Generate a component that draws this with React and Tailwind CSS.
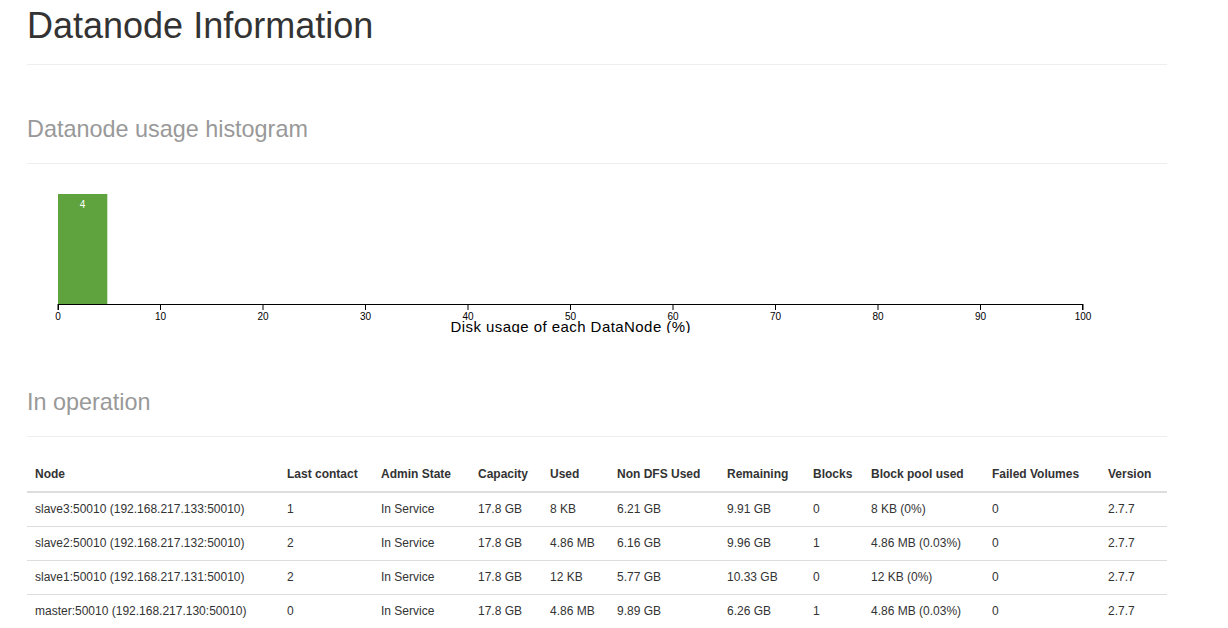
const COLS = [
  { key: "node", label: "Node", w: 252 },
  { key: "contact", label: "Last contact", w: 94 },
  { key: "state", label: "Admin State", w: 97 },
  { key: "cap", label: "Capacity", w: 72 },
  { key: "used", label: "Used", w: 67 },
  { key: "nondfs", label: "Non DFS Used", w: 110 },
  { key: "remain", label: "Remaining", w: 86 },
  { key: "blocks", label: "Blocks", w: 58 },
  { key: "pool", label: "Block pool used", w: 121 },
  { key: "failed", label: "Failed Volumes", w: 116 },
  { key: "version", label: "Version", w: 67 },
];

const NODES = [
  { node: "slave3:50010 (192.168.217.133:50010)", contact: "1", state: "In Service", cap: "17.8 GB", used: "8 KB", nondfs: "6.21 GB", remain: "9.91 GB", blocks: "0", pool: "8 KB (0%)", failed: "0", version: "2.7.7" },
  { node: "slave2:50010 (192.168.217.132:50010)", contact: "2", state: "In Service", cap: "17.8 GB", used: "4.86 MB", nondfs: "6.16 GB", remain: "9.96 GB", blocks: "1", pool: "4.86 MB (0.03%)", failed: "0", version: "2.7.7" },
  { node: "slave1:50010 (192.168.217.131:50010)", contact: "2", state: "In Service", cap: "17.8 GB", used: "12 KB", nondfs: "5.77 GB", remain: "10.33 GB", blocks: "0", pool: "12 KB (0%)", failed: "0", version: "2.7.7" },
  { node: "master:50010 (192.168.217.130:50010)", contact: "0", state: "In Service", cap: "17.8 GB", used: "4.86 MB", nondfs: "9.89 GB", remain: "6.26 GB", blocks: "1", pool: "4.86 MB (0.03%)", failed: "0", version: "2.7.7" },
];

const TICKS = Array.from({ length: 11 }, (_, i) => i * 10);

function Histogram() {
  // axis runs 1025px wide, from x=31 inside the svg
  const x0 = 31;
  const scale = 10.25;
  const axisY = 140;
  return (
    <svg width="1140" height="169" className="block" style={{ fontFamily: '"Liberation Sans", Arial, sans-serif' }}>
      <rect x={x0} y={30} width={49.3} height={axisY - 30} fill="#5fa33e" />
      <text x={x0 + 24.6} y={44} fontSize="10" fill="#fff" textAnchor="middle">4</text>
      <path d={`M${x0 + 0.5},${axisY + 6}V${axisY + 0.5}H${x0 + 1025 - 0.5}V${axisY + 6}`} fill="none" stroke="#000" strokeWidth="1" shapeRendering="crispEdges" />
      {TICKS.map(t => (
        <g key={t} transform={`translate(${x0 + t * scale},0)`}>
          <line x1="0" x2="0" y1={axisY} y2={axisY + 6} stroke="#000" strokeWidth="1" />
          <text y={axisY + 15.5} fontSize="10" textAnchor="middle" fill="#000">{t}</text>
        </g>
      ))}
      <text x={x0 + 512.5} y={168} fontSize="15" textAnchor="middle" textLength="240" lengthAdjust="spacing" fill="#000">
        Disk usage of each DataNode (%)
      </text>
    </svg>
  );
}

export default function App() {
  return (
    <div className="bg-white min-h-screen text-[#333]" style={{ fontFamily: '"Liberation Sans", Arial, sans-serif' }}>
      <div className="ml-[27px] w-[1140px]">
        <div className="pt-[6px] pb-[18px] border-b border-[#eee]">
          <h1 className="text-[36px] leading-[40px] font-normal">Datanode Information</h1>
        </div>

        <div className="mt-[51px] pb-[21px] border-b border-[#eee]">
          <h2 className="text-[23.4px] leading-[26px] text-[#999] font-normal">Datanode usage histogram</h2>
        </div>
        <Histogram />

        <div className="mt-[56px] pb-[21px] border-b border-[#eee]">
          <h2 className="text-[23.4px] leading-[26px] text-[#999] font-normal">In operation</h2>
        </div>

        <table className="mt-[21px] w-[1140px] table-fixed border-collapse text-[12px] leading-[17px]">
          <colgroup>
            {COLS.map(c => <col key={c.key} style={{ width: c.w }} />)}
          </colgroup>
          <thead>
            <tr>
              {COLS.map(c => (
                <th key={c.key} className="p-2 text-left font-bold border-b-2 border-[#ddd] whitespace-nowrap">{c.label}</th>
              ))}
            </tr>
          </thead>
          <tbody>
            {NODES.map((n, i) => (
              <tr key={i}>
                {COLS.map(c => (
                  <td key={c.key} className="p-2 border-t border-[#ddd] whitespace-nowrap">{n[c.key]}</td>
                ))}
              </tr>
            ))}
          </tbody>
        </table>
      </div>
    </div>
  );
}
